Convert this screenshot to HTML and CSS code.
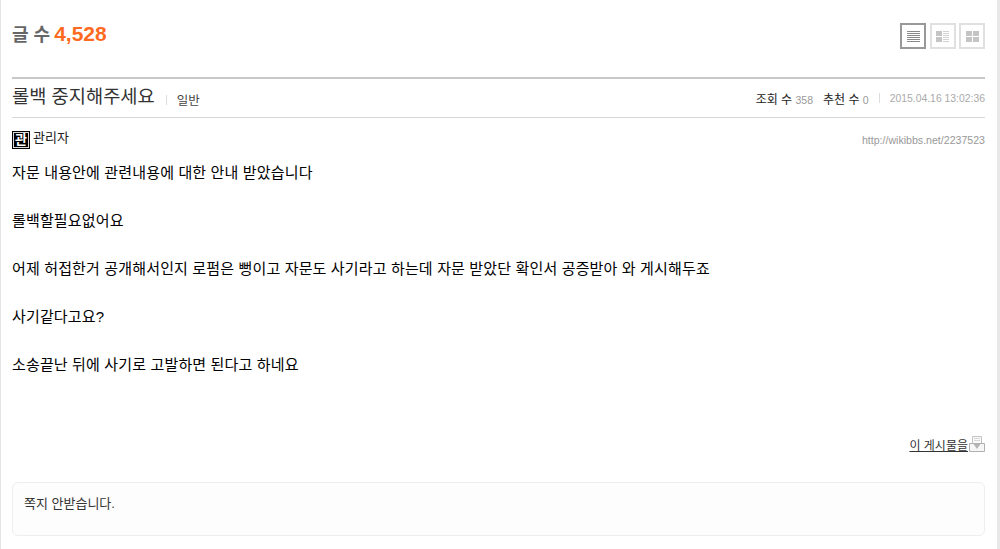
FILE: index.html
```html
<!DOCTYPE html>
<html lang="ko">
<head>
<meta charset="utf-8">
<title>롤백 중지해주세요</title>
<link rel="stylesheet" href="styles.css">
</head>
<body>
<div class="page">
  <header class="top">
    <div class="count">글 수 <strong>4,528</strong></div>
    <div class="views">
      <button class="view active" aria-label="목록">
        <svg width="13" height="11" viewBox="0 0 13 11"><path d="M0 .5h13M0 2.500h13M0 4.500h13M0 6.500h13M0 8.500h13M0 10.500h13" stroke="#8a8a8a" fill="none"/></svg>
      </button>
      <button class="view" aria-label="웹진">
        <svg width="13" height="11" viewBox="0 0 13 11"><path d="M0 0h6v5H0zM0 6h6v5H0z" fill="#c4c4c4"/><path d="M7 .5h6M7 2.500h6M7 4.500h6M7 6.500h6M7 8.500h6M7 10.500h6" stroke="#d2d2d2" fill="none"/></svg>
      </button>
      <button class="view" aria-label="갤러리">
        <svg width="13" height="11" viewBox="0 0 13 11"><path d="M0 0h6v5H0zM7 0h6v5H7zM0 6h6v5H0zM7 6h6v5H7z" fill="#c4c4c4"/></svg>
      </button>
    </div>
  </header>

  <section class="head">
    <div class="title-wrap">
      <h1 class="title">롤백 중지해주세요</h1>
      <span class="sep"></span>
      <span class="cat">일반</span>
    </div>
    <div class="meta">
      <span class="stat">조회 수 <em>358</em></span>
      <span class="stat">추천 수 <em>0</em></span>
      <span class="sep meta-sep"></span>
      <span class="date">2015.04.16 13:02:36</span>
    </div>
  </section>

  <section class="author">
    <div class="who"><span class="badge"><span>관</span></span>관리자</div>
    <a class="link">http://wikibbs.net/2237523</a>
  </section>

  <article class="body">
    <p>자문 내용안에 관련내용에 대한 안내 받았습니다</p>
    <p>롤백할필요없어요</p>
    <p>어제 허접한거 공개해서인지 로펌은 뻥이고 자문도 사기라고 하는데 자문 받았단 확인서 공증받아 와 게시해두죠</p>
    <p>사기같다고요?</p>
    <p>소송끝난 뒤에 사기로 고발하면 된다고 하네요</p>
  </article>

  <div class="actions">
    <a class="act">이 게시물을</a>
    <svg class="act-icon" width="16" height="16" viewBox="0 0 16 16"><path d="M3.500.5h9v8h-9z" fill="#fafafa" stroke="#c4c4c4"/><path d="M5 2.500h6M5 4.500h6" stroke="#d6d6d6" fill="none"/><path d="M.5 7.500h15v8H.5z" fill="#f6f6f6" stroke="#b0b0b0"/><path d="M4.500 8h7L8 13z" fill="#b4b4b4"/></svg>
  </div>

  <div class="comment">쪽지 안받습니다.</div>
</div>
</body>
</html>
```
FILE: styles.css
```css
* { box-sizing: border-box; }
html, body { margin: 0; height: 549px; overflow: hidden; background: #fff; }
body {
  font-family: "Liberation Sans", "Noto Sans CJK KR", sans-serif;
  color: #000;
}
.page {
  width: 1000px;
  height: 549px;
  padding: 0 12px 0 11px;
  border-left: 1px solid #e4e4e4;
  border-right: 3px solid #e8e8e8;
}
.top {
  display: flex;
  justify-content: space-between;
  align-items: flex-start;
  height: 79px;
  border-bottom: 2px solid #c8c8c8;
  padding-top: 23px;
}
.count {
  font-size: 18px;
  line-height: 22px;
  font-weight: bold;
  color: #666;
}
.count strong { color: #ff6a22; font-size: 21px; margin-left: -1px; }
.views { display: flex; gap: 3.5px; }
.view {
  width: 26px;
  height: 26px;
  padding: 0;
  background: #fff;
  border: 2px solid #e0e0e0;
  display: flex;
  align-items: center;
  justify-content: center;
}
.view.active { border-color: #999; }
.head {
  display: flex;
  justify-content: space-between;
  align-items: center;
  height: 39px;
  border-bottom: 1px solid #d8d8d8;
}
.title-wrap { display: flex; align-items: center; }
.title {
  margin: 0;
  font-size: 18.7px;
  line-height: 36px;
  font-weight: normal;
  color: #333;
  position: relative;
  top: -1px;
}
.sep {
  display: inline-block;
  width: 1px;
  height: 10px;
  background: #ddd;
  margin: 3px 10px 0 11px;
}
.cat { font-size: 12.5px; color: #444; margin-top: 3px; }
.meta { display: flex; align-items: center; font-size: 12px; color: #222; }
.stat { margin-right: 10px; }
.stat + .stat { margin-right: 0; }
.stat em { font-style: normal; font-size: 10.5px; color: #999; }
.meta-sep { margin: 0 10px; }
.date { font-size: 10.4px; color: #aaa; }
.author {
  display: flex;
  justify-content: space-between;
  align-items: center;
  height: 34px;
  padding-top: 10px;
}
.who { display: flex; align-items: flex-start; font-size: 13px; line-height: 14px; color: #222; }
.badge {
  width: 18px;
  height: 18px;
  background: #000;
  border: 1px solid #000;
  margin-right: 3px;
  display: flex;
  align-items: center;
  justify-content: center;
}
.badge span {
  width: 16px;
  height: 16px;
  border: 1px solid #ddd;
  color: #fff;
  font-size: 13px;
  line-height: 14px;
  font-weight: bold;
  text-align: center;
  overflow: hidden;
  display: block;
}
.link { font-size: 10.6px; color: #999; }
.body { font-size: 15px; letter-spacing: .15px; line-height: 24px; color: #000; padding-top: 9px; height: 280px; }
.body p { margin: 0 0 24px; }
.actions {
  display: flex;
  justify-content: flex-end;
  align-items: center;
  height: 24px;
}
.act { font-size: 12px; color: #333; text-decoration: underline; }
.act-icon { margin-left: 1px; }
.comment {
  margin-top: 26px;
  height: 54px;
  padding: 12px 11px;
  font-size: 13px;
  line-height: 18px;
  color: #333;
  background: #fdfdfd;
  border: 1px solid #eee;
  border-radius: 6px;
}
```
